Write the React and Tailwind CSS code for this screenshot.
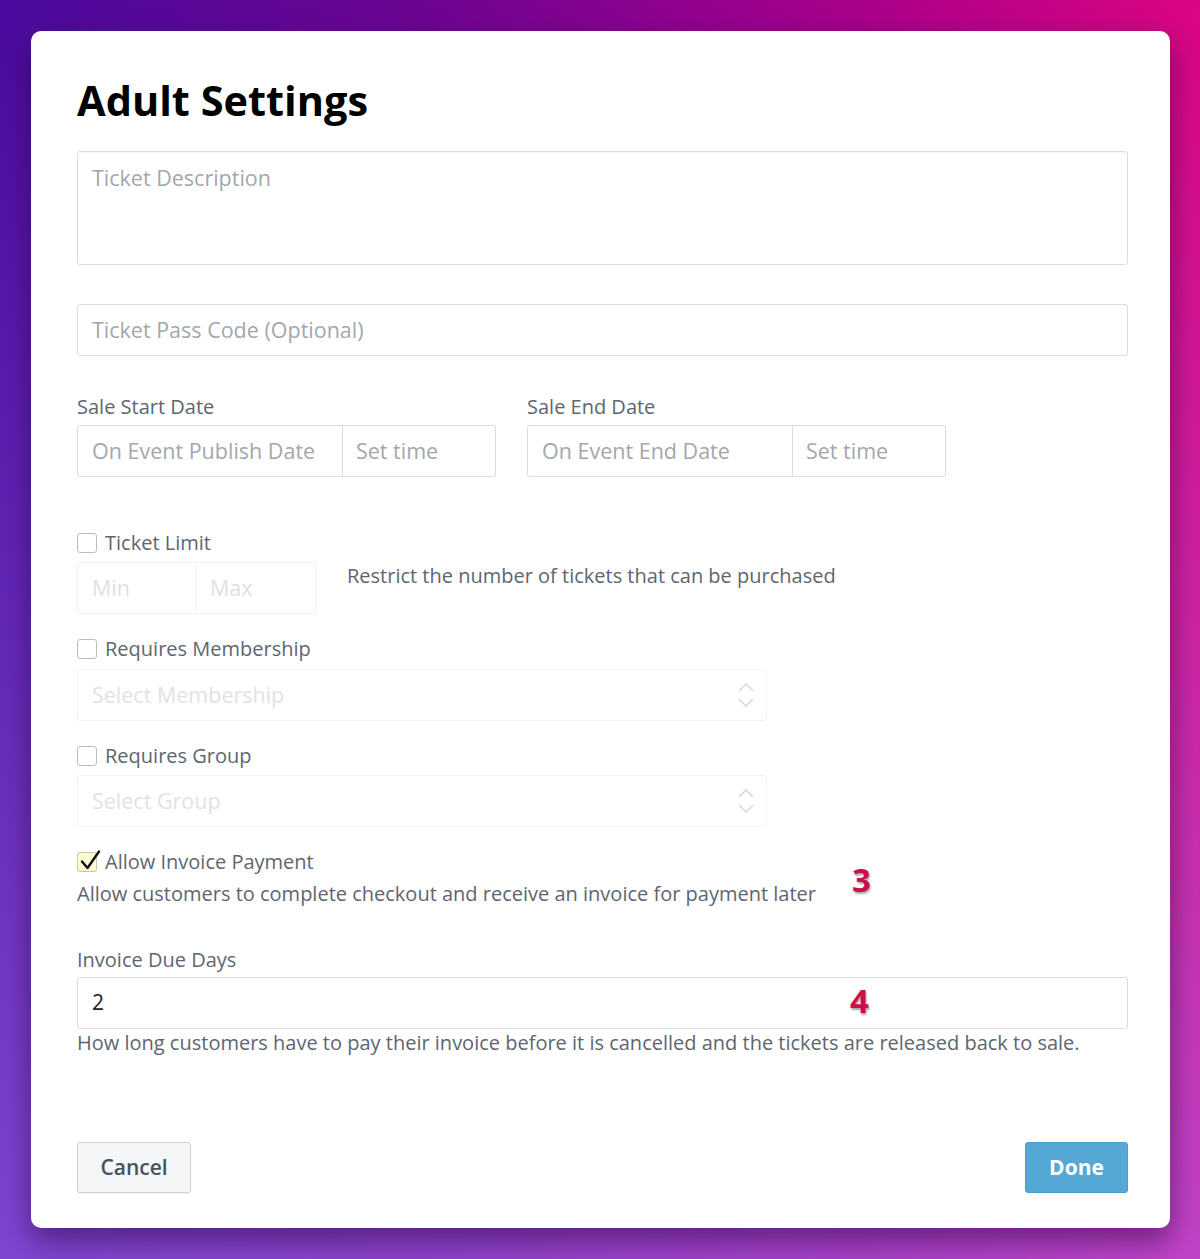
import React from "react";

const font = { fontFamily: '"Open Sans", "Liberation Sans", sans-serif' };

function Checkbox({ checked }) {
  if (checked) {
    return (
      <span className="relative inline-block w-[20px] h-[20px] rounded-[3px] border border-[#c9c9a0] bg-[#fbfbd6] shrink-0">
        <svg className="absolute left-[1px] top-[-4px]" width="24" height="24" viewBox="0 0 24 24">
          <path d="M3 12.5 L8.5 19 L20 2.5" fill="none" stroke="#111" strokeWidth="2.4" strokeLinecap="round" strokeLinejoin="round" />
        </svg>
      </span>
    );
  }
  return <span className="inline-block w-[20px] h-[20px] rounded-[3px] border border-[#bdbdbd] bg-white shrink-0" />;
}

function Chevrons() {
  return (
    <svg width="18" height="28" viewBox="0 0 18 28" className="shrink-0">
      <path d="M2 10 L9 3 L16 10" fill="none" stroke="#d9d9d9" strokeWidth="1.6" />
      <path d="M2 18 L9 25 L16 18" fill="none" stroke="#d9d9d9" strokeWidth="1.6" />
    </svg>
  );
}

export default function App() {
  return (
    <div
      className="w-full min-h-screen p-[31px] pr-[30px] bg-[linear-gradient(to_bottom,rgba(170,120,255,0)_0%,rgba(170,120,255,0.55)_100%),linear-gradient(to_right,#4a0a9d_0%,#6c0493_35%,#b0008a_75%,#dc0582_100%)]"
      style={font}
    >
      <div className="relative bg-white rounded-[10px] shadow-[0_12px_30px_rgba(40,0,60,0.55)] pl-[46px] pr-[42px] pt-[39px] pb-[35px] h-[1197px]">
        <h1 className="text-[41.5px] leading-[60px] font-bold text-black">Adult Settings</h1>

        <div className="mt-[21px] h-[114px] border border-[#dcdcdc] rounded-[3px] px-[14px] pt-[11px] text-[21.5px] leading-[30px] text-[#a3a7ab] shadow-[inset_0_1px_1px_rgba(0,0,0,0.04)]">
          Ticket Description
        </div>

        <div className="mt-[39px] h-[52px] border border-[#dcdcdc] rounded-[3px] px-[14px] flex items-center text-[21.5px] text-[#a3a7ab]">
          Ticket Pass Code (Optional)
        </div>

        <div className="mt-[39px] flex gap-[31px]">
          <div>
            <div className="text-[20px] leading-[24px] text-[#5d6670]">Sale Start Date</div>
            <div className="mt-[6px] flex h-[52px]">
              <div className="w-[266px] border border-[#dcdcdc] rounded-l-[3px] px-[14px] flex items-center text-[21.5px] text-[#a3a7ab]">On Event Publish Date</div>
              <div className="w-[153px] border border-l-0 border-[#dcdcdc] rounded-r-[3px] px-[13px] flex items-center text-[21.5px] text-[#a3a7ab]">Set time</div>
            </div>
          </div>
          <div>
            <div className="text-[20px] leading-[24px] text-[#5d6670]">Sale End Date</div>
            <div className="mt-[6px] flex h-[52px]">
              <div className="w-[266px] border border-[#dcdcdc] rounded-l-[3px] px-[14px] flex items-center text-[21.5px] text-[#a3a7ab]">On Event End Date</div>
              <div className="w-[153px] border border-l-0 border-[#dcdcdc] rounded-r-[3px] px-[13px] flex items-center text-[21.5px] text-[#a3a7ab]">Set time</div>
            </div>
          </div>
        </div>

        <div className="mt-[54px] flex items-center gap-[8px] h-[24px]">
          <Checkbox />
          <span className="text-[20px] text-[#5d6670]">Ticket Limit</span>
        </div>
        <div className="mt-[7px] flex items-start">
          <div className="flex h-[52px]">
            <div className="w-[120px] border border-[#f1f1f1] rounded-l-[3px] px-[14px] flex items-center text-[21.5px] text-[#e0e0e0]">Min</div>
            <div className="w-[120px] border border-l-0 border-[#f1f1f1] rounded-r-[3px] px-[13px] flex items-center text-[21.5px] text-[#e0e0e0]">Max</div>
          </div>
          <div className="ml-[30px] mt-[2px] text-[20px] leading-[24px] text-[#5d6670]">Restrict the number of tickets that can be purchased</div>
        </div>

        <div className="mt-[23px] flex items-center gap-[8px] h-[24px]">
          <Checkbox />
          <span className="text-[20px] text-[#5d6670]">Requires Membership</span>
        </div>
        <div className="mt-[8px] w-[690px] h-[52px] border border-[#f3f3f3] rounded-[3px] pl-[14px] pr-[11px] flex items-center justify-between text-[21.5px] text-[#e2e2e2]">
          <span>Select Membership</span>
          <Chevrons />
        </div>

        <div className="mt-[23px] flex items-center gap-[8px] h-[24px]">
          <Checkbox />
          <span className="text-[20px] text-[#5d6670]">Requires Group</span>
        </div>
        <div className="mt-[7px] w-[690px] h-[52px] border border-[#f3f3f3] rounded-[3px] pl-[14px] pr-[11px] flex items-center justify-between text-[21.5px] text-[#e2e2e2]">
          <span>Select Group</span>
          <Chevrons />
        </div>

        <div className="mt-[23px] flex items-center gap-[8px] h-[24px]">
          <Checkbox checked />
          <span className="text-[20px] text-[#5d6670]">Allow Invoice Payment</span>
        </div>
        <div className="mt-[8px] text-[20px] leading-[24px] text-[#5d6670]">
          Allow customers to complete checkout and receive an invoice for payment later
        </div>

        <div className="mt-[42px] text-[20px] leading-[24px] text-[#5d6670]">Invoice Due Days</div>
        <div className="mt-[5px] h-[52px] border border-[#dcdcdc] rounded-[3px] px-[14px] flex items-center text-[21px] text-[#222]">2</div>
        <div className="mt-[2px] text-[20px] leading-[24px] text-[#5d6670]">
          How long customers have to pay their invoice before it is cancelled and the tickets are released back to sale.
        </div>

        <div className="mt-[87px] flex justify-between">
          <button className="w-[114px] h-[51px] rounded-[3px] border border-[#cfd2d4] bg-[#f5f6f7] text-[21px] font-semibold text-[#46525c] shadow-[0_1px_1px_rgba(0,0,0,0.06)]">
            Cancel
          </button>
          <button className="w-[103px] h-[51px] rounded-[3px] border border-[#4b9dcb] bg-[#55a7d5] text-[21px] font-bold text-white">
            Done
          </button>
        </div>

        <span className="absolute left-[821px] top-[832px] text-[33px] font-bold leading-none text-[#cc0f4a] [text-shadow:1px_2px_2px_rgba(0,0,0,0.35)]">3</span>
        <span className="absolute left-[819px] top-[953px] text-[33px] font-bold leading-none text-[#cc0f4a] [text-shadow:1px_2px_2px_rgba(0,0,0,0.35)]">4</span>
      </div>
    </div>
  );
}
